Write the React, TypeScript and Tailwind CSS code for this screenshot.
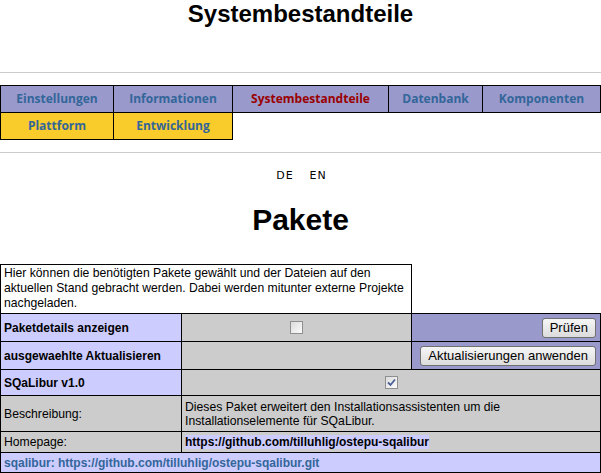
import React from "react";

const arial = { fontFamily: '"Liberation Sans", Arial, sans-serif' };

function Btn({ children }: { children: React.ReactNode }) {
  return (
    <button className="h-[20px] rounded-[3px] border border-[#707070] bg-gradient-to-b from-[#f6f6f6] to-[#dcdcdc] px-[7px] text-[13px] leading-[18px] text-black">
      {children}
    </button>
  );
}

function Check({ checked }: { checked?: boolean }) {
  return (
    <span className="flex h-[13px] w-[13px] items-center justify-center border border-[#8e8f8f] bg-gradient-to-br from-[#dcdcdc] to-[#fbfbfb]">
      {checked && (
        <svg width="9" height="9" viewBox="0 0 9 9">
          <path d="M1 4.5 L3.5 7 L8 1.5" stroke="#4a5f97" strokeWidth="1.8" fill="none" />
        </svg>
      )}
    </span>
  );
}

export default function App() {
  const navCell =
    "flex h-[26px] items-center justify-center text-[12px] font-bold text-[#336699]";
  return (
    <div className="w-[601px] h-[473px] overflow-hidden bg-white text-black" style={arial}>
      <div className="h-[72px] text-center text-[24px] font-bold leading-[28px]">Systembestandteile</div>
      <div className="h-px bg-[#cccccc]" />

      <nav className="mt-[12px]" style={{ fontFamily: '"Open Sans", "DejaVu Sans", sans-serif' }}>
        <div className="grid grid-cols-[112px_118px_155px_93px_117px] gap-px bg-black p-px">
          <div className={`${navCell} bg-[#9999cc]`}>Einstellungen</div>
          <div className={`${navCell} bg-[#9999cc]`}>Informationen</div>
          <div className={`${navCell} bg-[#9999cc] !text-[#990000]`}>Systembestandteile</div>
          <div className={`${navCell} bg-[#9999cc]`}>Datenbank</div>
          <div className={`${navCell} bg-[#9999cc]`}>Komponenten</div>
        </div>
        <div className="grid w-[233px] grid-cols-[112px_118px] gap-px bg-black px-px pb-px">
          <div className={`${navCell} bg-[#f9cb2b]`}>Plattform</div>
          <div className={`${navCell} bg-[#f9cb2b]`}>Entwicklung</div>
        </div>
      </nav>

      <div className="mt-[12px] h-px bg-[#cccccc]" />

      <div
        className="mt-[17px] flex h-[12px] justify-center gap-[16px] pl-[2px] text-[11px] leading-[12px] tracking-[1px]"
        style={{ fontFamily: '"DejaVu Sans", sans-serif' }}
      >
        <span>DE</span>
        <span>EN</span>
      </div>

      <div className="mt-[21px] h-[34px] text-center text-[30px] font-bold leading-[34px]">Pakete</div>

      <div className="mt-[27px] h-[49px] w-[412px] border-x border-t border-black pl-[3px] pt-[1px] text-[12.2px] leading-[15px] whitespace-nowrap">
        Hier können die benötigten Pakete gewählt und der Dateien auf den
        <br />
        aktuellen Stand gebracht werden. Dabei werden mitunter externe Projekte
        <br />
        nachgeladen.
      </div>

      <div className="grid grid-cols-[180px_229px_188px] grid-rows-[27px_27px_25px_35px_20px_19px] gap-px border border-black bg-black text-[12px] leading-[14px]">
        <div className="flex items-center bg-[#ccccff] pl-[3px] font-bold">Paketdetails anzeigen</div>
        <div className="flex items-center justify-center bg-[#cccccc]">
          <Check />
        </div>
        <div className="flex items-center justify-end bg-[#9999cc] pr-[4px]">
          <Btn>Prüfen</Btn>
        </div>

        <div className="flex items-center bg-[#ccccff] pl-[3px] font-bold">ausgewaehlte Aktualisieren</div>
        <div className="bg-[#cccccc]" />
        <div className="flex items-center justify-end bg-[#9999cc] pr-[4px]">
          <Btn>Aktualisierungen anwenden</Btn>
        </div>

        <div className="flex items-center bg-[#ccccff] pl-[3px] font-bold">SQaLibur v1.0</div>
        <div className="col-span-2 flex items-center justify-center bg-[#cccccc]">
          <Check checked />
        </div>

        <div className="flex items-center bg-[#cccccc] pl-[3px] text-[12.2px]">Beschreibung:</div>
        <div className="col-span-2 flex items-center bg-[#cccccc] pl-[3px] text-[12.2px] whitespace-nowrap">
          <div>
            Dieses Paket erweitert den Installationsassistenten um die
            <br />
            Installationselemente für SQaLibur.
          </div>
        </div>

        <div className="flex items-center bg-[#cccccc] pl-[3px] text-[12.2px]">Homepage:</div>
        <div className="col-span-2 flex items-center bg-[#cccccc] pl-[3px] font-bold">
          <span className="bg-[#ccccff]">https://github.com/tilluhlig/ostepu-sqalibur</span>
        </div>

        <div className="col-span-3 flex items-center bg-[#ccccff] pl-[3px] font-bold text-[#336699]">
          sqalibur: https://github.com/tilluhlig/ostepu-sqalibur.git
        </div>
      </div>
    </div>
  );
}
